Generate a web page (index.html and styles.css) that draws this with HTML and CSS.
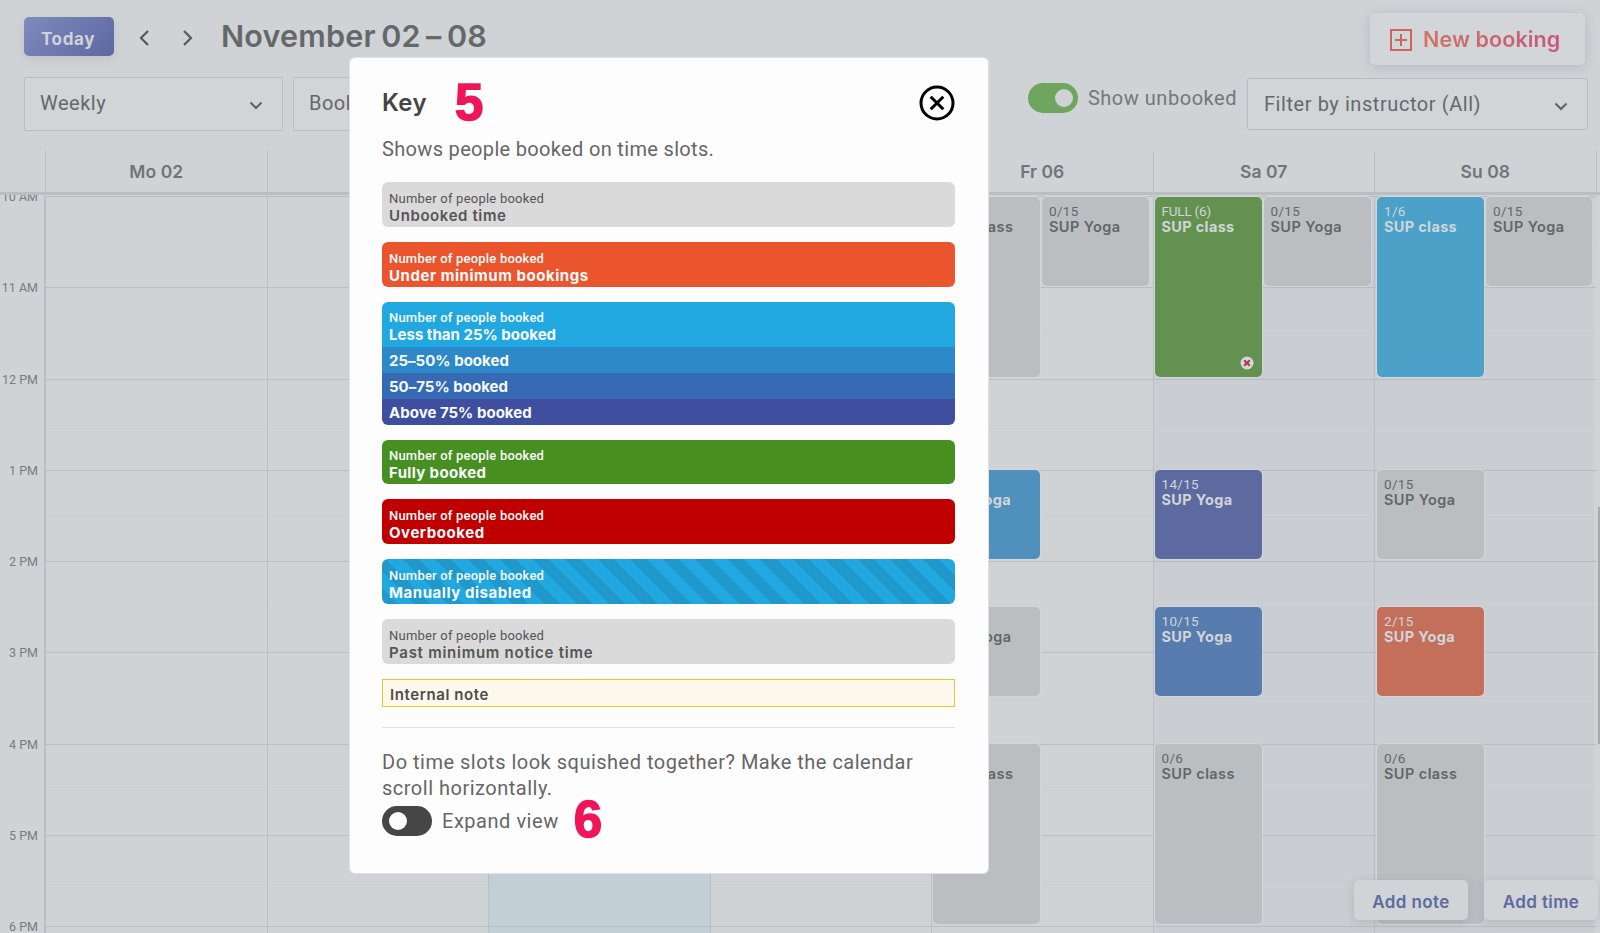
FILE: index.html
```html
<!DOCTYPE html>
<html lang="en">
<head>
<meta charset="utf-8">
<title>Booking calendar</title>
<link rel="stylesheet" href="styles.css">
</head>
<body>
<div class="app">
  <header class="topbar">
    <button class="today">Today</button>
    <svg class="nav prev" width="12" height="18" viewBox="0 0 12 18"><path d="M10 2 3 9l7 7"/></svg>
    <svg class="nav next" width="12" height="18" viewBox="0 0 12 18"><path d="M2 2l7 7-7 7"/></svg>
    <h1 class="range">November 02 – 08</h1>
    <button class="new-booking">
      <svg width="22" height="22" viewBox="0 0 22 22"><path d="M1 1h20v20H1zM11 5v12M5 11h12"/></svg>
      <span>New booking</span>
    </button>
  </header>
  <div class="filters">
    <div class="select weekly"><span>Weekly</span><svg width="14" height="9" viewBox="0 0 14 9"><path d="M1.500 1.500 7 7l5.500-5.500"/></svg></div>
    <div class="select bookings"><span>Book</span></div>
    <div class="switch-row"><span class="switch on"><i></i></span><span class="switch-label">Show unbooked</span></div>
    <div class="select instructor"><span>Filter by instructor (All)</span><svg width="14" height="9" viewBox="0 0 14 9"><path d="M1.500 1.500 7 7l5.500-5.500"/></svg></div>
  </div>
  <div class="day-head">
    <span class="corner"></span><span>Mo 02</span><span></span><span></span><span></span><span>Fr 06</span><span>Sa 07</span><span>Su 08</span><span class="edge"></span>
  </div>
  <main class="calendar">
    <div class="hours"><span>10 AM</span><span>11 AM</span><span>12 PM</span><span>1 PM</span><span>2 PM</span><span>3 PM</span><span>4 PM</span><span>5 PM</span><span>6 PM</span></div>
    <div class="board">
      <div class="days">
        <div class="day"></div>
        <div class="day"></div>
        <div class="day now"></div>
        <div class="day"></div>
        <div class="day">
          <div class="slot a r1 h4"><small>&nbsp;</small><b>SUP class</b></div>
          <div class="slot b r1 h2"><small>0/15</small><b>SUP Yoga</b></div>
          <div class="slot a r7 h2 mid"><small>&nbsp;</small><b>SUP Yoga</b></div>
          <div class="slot a r10 h2"><small>&nbsp;</small><b>SUP Yoga</b></div>
          <div class="slot a r13 h4"><small>&nbsp;</small><b>SUP class</b></div>
        </div>
        <div class="day weekend">
          <div class="slot a r1 h4 full"><small>FULL (6)</small><b>SUP class</b>
            <svg class="cross" width="14" height="14" viewBox="0 0 14 14"><circle cx="7" cy="7" r="6.500"/><path d="M4.200 4.200l5.600 5.600M9.800 4.200l-5.600 5.600"/></svg></div>
          <div class="slot b r1 h2"><small>0/15</small><b>SUP Yoga</b></div>
          <div class="slot a r7 h2 most"><small>14/15</small><b>SUP Yoga</b></div>
          <div class="slot a r10 h2 half"><small>10/15</small><b>SUP Yoga</b></div>
          <div class="slot a r13 h4"><small>0/6</small><b>SUP class</b></div>
        </div>
        <div class="day weekend sunday">
          <div class="slot a r1 h4 low"><small>1/6</small><b>SUP class</b></div>
          <div class="slot b r1 h2"><small>0/15</small><b>SUP Yoga</b></div>
          <div class="slot a r7 h2"><small>0/15</small><b>SUP Yoga</b></div>
          <div class="slot a r10 h2 under"><small>2/15</small><b>SUP Yoga</b></div>
          <div class="slot a r13 h4"><small>0/6</small><b>SUP class</b></div>
        </div>
      </div>
      <div class="lines"><i></i><i></i><i></i><i></i><i></i><i></i><i></i><i></i><i></i></div>
    </div>
  </main>
  <div class="scroll-thumb"></div>
  <div class="actions"><button>Add note</button><button>Add time</button></div>

  <section class="modal">
    <div class="modal-head">
      <h2>Key</h2><span class="step">5</span>
      <svg class="close" width="36" height="36" viewBox="0 0 36 36"><circle cx="18" cy="18" r="16"/><path d="M11.700 11.700l12.600 12.600M24.300 11.700 11.700 24.300"/></svg>
    </div>
    <p class="intro">Shows people booked on time slots.</p>
    <div class="key grey"><small>Number of people booked</small><b>Unbooked time</b></div>
    <div class="key orange"><small>Number of people booked</small><b>Under minimum bookings</b></div>
    <div class="key-stack">
      <div class="key sky"><small>Number of people booked</small><b>Less than 25% booked</b></div>
      <div class="band b50"><b>25–50% booked</b></div>
      <div class="band b75"><b>50–75% booked</b></div>
      <div class="band b100"><b>Above 75% booked</b></div>
    </div>
    <div class="key green"><small>Number of people booked</small><b>Fully booked</b></div>
    <div class="key red"><small>Number of people booked</small><b>Overbooked</b></div>
    <div class="key sky striped"><small>Number of people booked</small><b>Manually disabled</b></div>
    <div class="key grey past"><small>Number of people booked</small><b>Past minimum notice time</b></div>
    <div class="note"><b>Internal note</b></div>
    <hr>
    <p class="hint">Do time slots look squished together? Make the calendar<br>scroll horizontally.</p>
    <div class="expand"><span class="switch"><i></i></span><span class="switch-label">Expand view</span><span class="step">6</span></div>
  </section>
</div>
</body>
</html>
```
FILE: styles.css
```css
* { box-sizing: border-box; }
body { margin: 0; font-family: Roboto, "Liberation Sans", sans-serif; }
h1, h2, p { margin: 0; }
button { font: inherit; border: 0; margin: 0; }
svg { fill: none; flex: none; }

.app { position: relative; width: 1600px; height: 933px; overflow: hidden; background: #cfd3d6; color: #65686a; display: flex; flex-direction: column; }

.topbar { height: 77px; flex: none; display: flex; padding: 0 15px 0 24px; align-items: flex-start; }
.today { width: 90px; height: 39px; margin-top: 17px; padding: 4px 2px 0 0; border-radius: 5px; background: linear-gradient(135deg, #7e8bbd, #5c68a0); color: #cfd3d9; font: 700 17px Inter, sans-serif; letter-spacing: .6px; box-shadow: 0 4px 10px rgba(90, 95, 105, .12); }
.nav { margin-top: 29px; stroke: #55595c; stroke-width: 2.200; }
.prev { margin-left: 24px; }
.next { margin-left: 32px; }
.range { margin: 16px 0 0 27px; font: 600 30.500px/40px Inter, sans-serif; letter-spacing: .2px; word-spacing: -2.500px; white-space: nowrap; }
.new-booking { margin: 13px 0 0 auto; width: 215px; height: 52px; padding: 3px 0 0 20px; display: flex; align-items: center; gap: 11px; border-radius: 5px; background: #d2d6d9; font: 600 21.500px Inter, sans-serif; letter-spacing: .1px; box-shadow: 0 2px 12px rgba(90, 95, 105, .22); }
.new-booking svg { stroke: #cf6558; stroke-width: 2; margin-top: -2px; }
.new-booking span { margin-top: -3px; white-space: nowrap; background: linear-gradient(90deg, #cf7466, #c9567a); -webkit-background-clip: text; background-clip: text; color: transparent; }

.filters { height: 74px; flex: none; display: flex; align-items: flex-start; padding: 0 12px 0 24px; font-size: 20px; }
.select { display: flex; justify-content: space-between; align-items: center; height: 54px; border: 1px solid #b9bdc0; border-radius: 2px; background: #d1d5d8; padding: 0 19px 3px 15px; white-space: nowrap; letter-spacing: .5px; }
.select svg { stroke: #606365; stroke-width: 2; margin-top: 5px; }
.weekly { width: 259px; }
.bookings { width: 259px; margin-left: 10px; }
.instructor { width: 341px; height: 52px; margin: 1px 0 0 10px; padding: 0 19px 1px 16px; letter-spacing: .57px; }
.switch-row { margin: 6px 0 0 auto; display: flex; align-items: center; color: #74777a; }
.switch { width: 50px; height: 30px; border-radius: 15px; background: #464646; display: flex; align-items: center; padding: 0 7px; flex: none; }
.switch i { width: 18px; height: 18px; border-radius: 50%; background: #fdfdfd; }
.switch.on { background: #6fa55e; justify-content: flex-end; padding-right: 5px; }
.switch.on i { background: #cfd3d6; }
.switch-label { margin-left: 10px; white-space: nowrap; font-size: 20px; letter-spacing: .53px; }

.day-head { height: 44px; flex: none; display: grid; grid-template-columns: 45px repeat(7, 221.500px) 1fr; border-bottom: 3px solid #babec1; font: 600 17.500px/42px Inter, sans-serif; letter-spacing: .05px; text-align: center; color: #717578; }
.day-head span + span { border-left: 1px solid #bbbfc2; }

.calendar { display: flex; flex: 1; min-height: 0; padding-top: 1px; overflow: hidden; }
.hours { width: 46px; flex: none; border-right: 2px solid #bbbfc2; display: grid; grid-auto-rows: 91.250px; padding-right: 6px; text-align: right; font-size: 12.500px; line-height: 16px; color: #777c80; white-space: nowrap; }
.hours span { margin-top: -7px; }
.board { flex: 1; display: grid; grid-template-columns: 1551px; }
.days, .lines { grid-area: 1 / 1; }
.days { display: grid; grid-template-columns: repeat(7, 221.500px); margin-left: -1px; z-index: 1; }
.day { display: grid; grid-template: repeat(18, 45.560px) / 107px 107px; column-gap: 2px; padding: 1px 0 0 1px; border-left: 1px solid #bbbfc2; }
.day:first-child { border-left: 0; }
.now { background: rgba(170, 200, 218, .35); }
.weekend { background: rgba(170, 170, 175, .13); }
.sunday { width: 220px; padding-left: 2px; grid-template-columns: 107px 106px; }
.lines { display: grid; grid-auto-rows: 91.250px; }
.lines i { border-top: 1px solid #babec1; background: linear-gradient(#cbd0d3, #cbd0d3) 0 45px / 100% 1px no-repeat; }

.slot { position: relative; margin: 0 0 2px; padding: 7px 0 0 7px; border-radius: 5px; background: #babec1; box-shadow: 0 0 0 1px #d2d6d9; color: #636668; line-height: 15px; white-space: nowrap; overflow: hidden; }
.slot small { display: block; font-size: 13.500px; letter-spacing: .3px; }
.slot b { display: block; font: 600 14.500px/16px Inter, sans-serif; letter-spacing: .42px; }
.a { grid-column: 1; } .b { grid-column: 2; }
.r1 { grid-row-start: 1; } .r7 { grid-row-start: 7; } .r10 { grid-row-start: 10; } .r13 { grid-row-start: 13; }
.h2 { grid-row-end: span 2; } .h4 { grid-row-end: span 4; }
.full, .low, .mid, .half, .most, .under { color: #d0d5d9; }
.full b, .low b, .mid b, .half b, .most b, .under b { font-weight: 700; letter-spacing: .33px; }
.full { background: #639150; }
.full small { letter-spacing: -.2px; }
.low { background: #4ca1c8; }
.mid { background: #5090bc; }
.half { background: #577cad; }
.most { background: #5d6a9f; }
.under { background: #c46f5a; }
.cross { position: absolute; right: 8px; bottom: 7px; fill: #d6d8da; }
.cross path { stroke: #b23b47; stroke-width: 2.200; }

.scroll-thumb { position: absolute; right: 0; top: 507px; width: 2px; height: 237px; background: #a7abae; }
.actions { position: absolute; z-index: 3; left: 1354px; top: 880px; display: flex; gap: 16px; }
.actions button { width: 114px; height: 40px; padding: 3px 0 0; border-radius: 5px; background: #d0d4d7; color: #5e6aa0; font: 600 17px Inter, sans-serif; letter-spacing: .4px; white-space: nowrap; box-shadow: 0 2px 10px rgba(90, 95, 105, .2); }

.modal { position: absolute; z-index: 5; left: 349px; top: 57px; width: 640px; height: 817px; padding: 0 33px 0 32px; border: 1px solid #dfe1e3; border-radius: 6px; background: #fdfdfd; color: #666; display: flex; flex-direction: column; }
.modal-head { height: 76px; display: flex; align-items: center; padding-top: 14px; }
.modal h2 { font: 600 24px/30px Inter, sans-serif; color: #444; letter-spacing: .4px; }
.step { color: #ee1659; font: 700 51px/50px "Liberation Sans", sans-serif; -webkit-text-stroke: 1.500px #ee1659; margin-left: 28px; }
.close { margin-left: auto; stroke: #000; stroke-width: 3; }
.intro { font-size: 20px; line-height: 26px; letter-spacing: .33px; padding-top: 2px; margin-bottom: 20px; }
.key { height: 45px; flex: none; border-radius: 6px; padding: 8px 7px 0; margin-bottom: 15px; color: #f7fbfc; }
.key small { display: block; font-size: 13px; line-height: 17px; letter-spacing: .23px; }
.key b, .band b, .note b { display: block; font: 600 15px/18px Inter, sans-serif; letter-spacing: .6px; }
.key:not(.grey) small { font-weight: 500; letter-spacing: .2px; }
.key:not(.grey) b, .band b { font-weight: 700; letter-spacing: .55px; }
.key.past b { letter-spacing: .74px; }
.grey { background: #dadada; color: #555; }
.orange { background: #eb552e; }
.sky { background: #22a8e1; }
.green { background: #478f20; height: 44px; padding-top: 7px; }
.key.green b { letter-spacing: .35px; }
.red { background: #c00000; }
.striped { background: repeating-linear-gradient(45deg, #1f99cc 0 11.500px, #22a8e1 11.500px 23px); }
.key-stack { border-radius: 6px; overflow: hidden; margin-bottom: 15px; flex: none; }
.key-stack .key { margin: 0; border-radius: 0; padding-top: 7px; }
.key-stack .key b, .key-stack .band b { letter-spacing: .02px; }
.band { height: 26px; padding: 5px 7px; color: #f7fbfc; }
.b50 { background: #2c88c8; } .b75 { background: #366ab5; } .b100 { background: #3f4e9f; }
.note { height: 28px; flex: none; border: 1px solid #efc62c; background: #fef9ed; padding: 6px 7px; color: #4d4d4d; }
.modal hr { width: 100%; margin: 20px 0 21px; border: 0; border-top: 1px solid #e2e2e2; }
.hint { font-size: 20px; line-height: 26px; letter-spacing: .5px; white-space: nowrap; }
.expand { height: 30px; margin-top: 5px; display: flex; align-items: center; }
.expand .step { margin: -3px 0 0 15px; }
```
